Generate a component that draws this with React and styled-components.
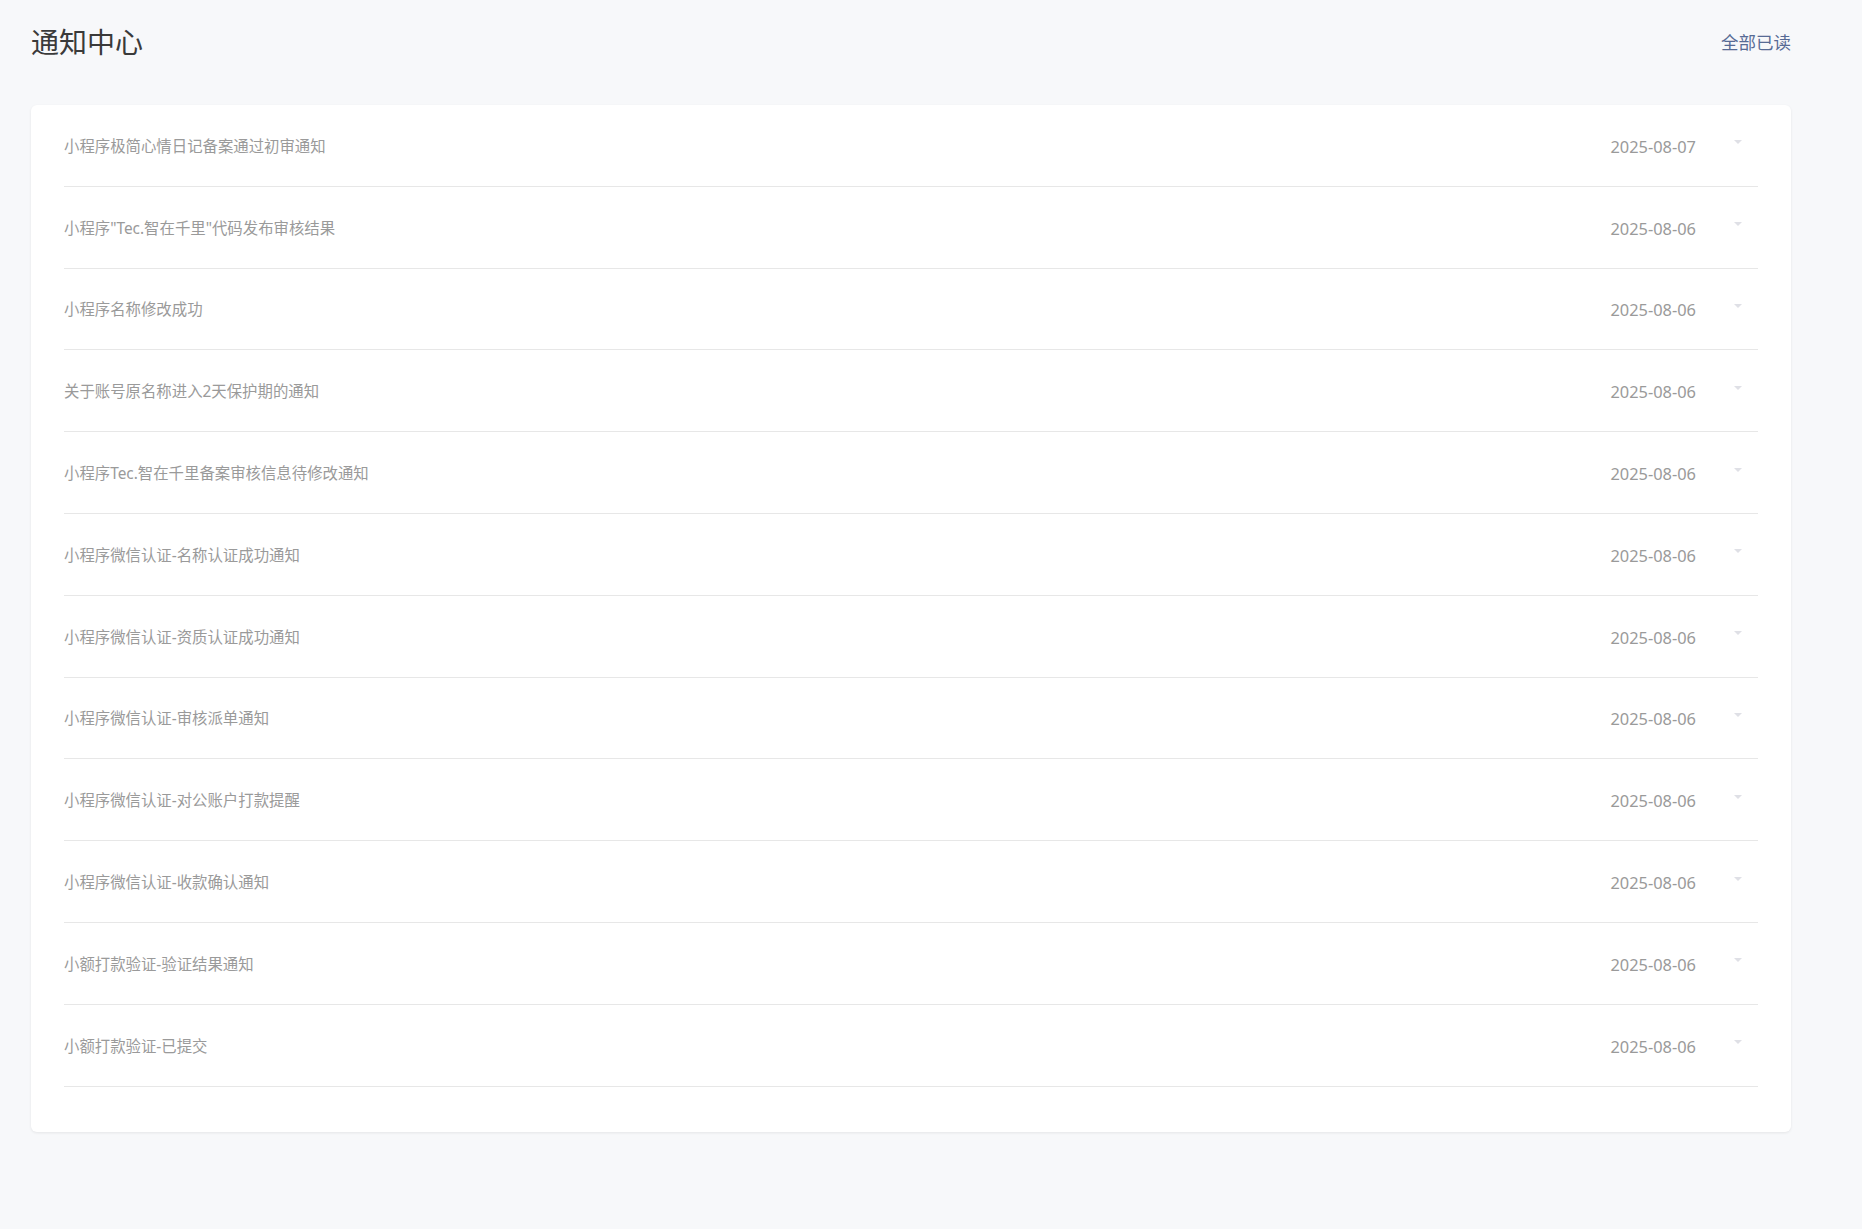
import React from "react";
import styled, { createGlobalStyle } from "styled-components";

const GlobalStyle = createGlobalStyle`
  body {
    margin: 0;
    background: #f7f8fa;
    font-family: "Noto Sans", "Noto Sans CJK SC", sans-serif;
  }
`;

const StyledPage = styled.div`
  padding: 24px 71px 80px 31px;
`;

const StyledHeader = styled.div`
  display: flex;
  justify-content: space-between;
  align-items: center;
  height: 36px;
  margin-bottom: 45px;
`;

const StyledTitle = styled.h1`
  margin: 0;
  font-size: 28px;
  font-weight: 400;
  color: #3a3a3a;
  line-height: 36px;
`;

const StyledReadAll = styled.a`
  font-size: 17.5px;
  color: #576b95;
  cursor: pointer;
  line-height: 36px;
`;

const StyledCard = styled.div`
  background: #fff;
  border-radius: 6px;
  box-shadow: 0 1px 3px rgba(0, 0, 0, 0.08);
  padding: 0 33px 45px;
`;

const StyledRow = styled.div`
  display: flex;
  align-items: center;
  height: 81.8px;
  box-sizing: border-box;
  border-bottom: 1px solid #e7e7e7;
  cursor: pointer;
`;

const StyledName = styled.div`
  flex: 1;
  font-size: 15.4px;
  color: #9a9a9a;
`;

const StyledDate = styled.div`
  font-size: 16.4px;
  color: #9a9a9a;
  padding-top: 2px;
`;

const StyledCaret = styled.span`
  width: 0;
  height: 0;
  margin: 0 16px 0 38px;
  border-left: 4px solid transparent;
  border-right: 4px solid transparent;
  border-top: 4px solid #dfe0e6;
  transform: translateY(-3px);
`;

const notices = [
  { title: "小程序极简心情日记备案通过初审通知", date: "2025-08-07" },
  { title: "小程序\"Tec.智在千里\"代码发布审核结果", date: "2025-08-06" },
  { title: "小程序名称修改成功", date: "2025-08-06" },
  { title: "关于账号原名称进入2天保护期的通知", date: "2025-08-06" },
  { title: "小程序Tec.智在千里备案审核信息待修改通知", date: "2025-08-06" },
  { title: "小程序微信认证-名称认证成功通知", date: "2025-08-06" },
  { title: "小程序微信认证-资质认证成功通知", date: "2025-08-06" },
  { title: "小程序微信认证-审核派单通知", date: "2025-08-06" },
  { title: "小程序微信认证-对公账户打款提醒", date: "2025-08-06" },
  { title: "小程序微信认证-收款确认通知", date: "2025-08-06" },
  { title: "小额打款验证-验证结果通知", date: "2025-08-06" },
  { title: "小额打款验证-已提交", date: "2025-08-06" }
];

function App() {
  return (
    <>
      <GlobalStyle />
      <StyledPage>
        <StyledHeader>
          <StyledTitle>通知中心</StyledTitle>
          <StyledReadAll>全部已读</StyledReadAll>
        </StyledHeader>
        <StyledCard>
          {notices.map((item, index) => (
            <StyledRow key={item.title + index}>
              <StyledName>{item.title}</StyledName>
              <StyledDate>{item.date}</StyledDate>
              <StyledCaret />
            </StyledRow>
          ))}
        </StyledCard>
      </StyledPage>
    </>
  );
}

export default App;
